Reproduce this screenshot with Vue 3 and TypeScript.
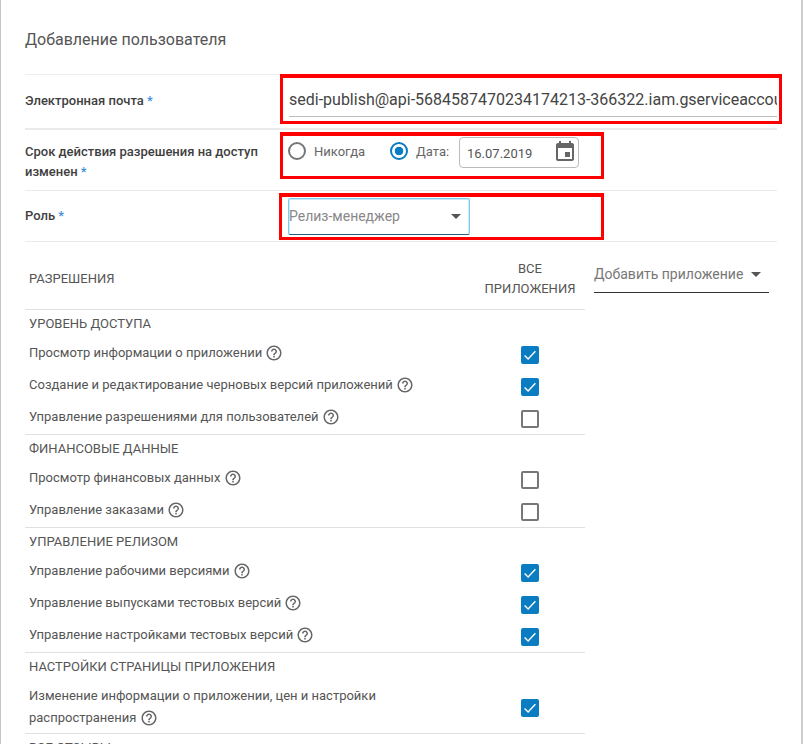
<script setup lang="ts">
interface Permission {
  label: string
  checked: boolean
  tall?: boolean
}

interface Section {
  title: string
  items: Permission[]
}

const email = 'sedi-publish@api-5684587470234174213-366322.iam.gserviceaccount.com'

const helpPath =
  'M11 18h2v-2h-2v2zm1-16C6.48 2 2 6.48 2 12s4.48 10 10 10 10-4.48 10-10S17.52 2 12 2zm0 18c-4.41 0-8-3.59-8-8s3.59-8 8-8 8 3.59 8 8-3.59 8-8 8zm0-14c-2.21 0-4 1.79-4 4h2c0-1.1.9-2 2-2s2 .9 2 2c0 2-3 1.75-3 5h2c0-2.25 3-2.5 3-5 0-2.21-1.79-4-4-4z'

const sections: Section[] = [
  {
    title: 'Уровень доступа',
    items: [
      { label: 'Просмотр информации о приложении', checked: true },
      { label: 'Создание и редактирование черновых версий приложений', checked: true },
      { label: 'Управление разрешениями для пользователей', checked: false },
    ],
  },
  {
    title: 'Финансовые данные',
    items: [
      { label: 'Просмотр финансовых данных', checked: false },
      { label: 'Управление заказами', checked: false },
    ],
  },
  {
    title: 'Управление релизом',
    items: [
      { label: 'Управление рабочими версиями', checked: true },
      { label: 'Управление выпусками тестовых версий', checked: true },
      { label: 'Управление настройками тестовых версий', checked: true },
    ],
  },
  {
    title: 'Настройки страницы приложения',
    items: [
      {
        label: 'Изменение информации о приложении, цен и настройки распространения',
        checked: true,
        tall: true,
      },
    ],
  },
  { title: 'Все отзывы', items: [] },
]
</script>

<template>
  <div class="page">
    <h1 class="title">Добавление пользователя</h1>

    <section class="form">
      <div class="form-row row-email">
        <div class="form-label">Электронная почта <span class="req">*</span></div>
        <div class="email-value">{{ email }}</div>
      </div>
      <div class="form-row row-expiry">
        <div class="form-label">Срок действия разрешения на доступ изменен <span class="req">*</span></div>
        <div class="expiry">
          <span class="radio"></span>
          <span class="radio-text never">Никогда</span>
          <span class="radio on"></span>
          <span class="radio-text date-label">Дата:</span>
          <div class="date-box">
            <span>16.07.2019</span>
            <svg class="calendar" viewBox="0 0 24 24" width="24" height="24">
              <path
                d="M17 12h-5v5h5v-5zM16 1v2H8V1H6v2H5c-1.11 0-1.99.9-1.99 2L3 19c0 1.1.89 2 2 2h14c1.1 0 2-.9 2-2V5c0-1.1-.9-2-2-2h-1V1h-2zm3 18H5V8h14v11z"
              />
            </svg>
          </div>
        </div>
      </div>
      <div class="form-row row-role">
        <div class="form-label">Роль <span class="req">*</span></div>
        <div class="role-select">
          <span>Релиз-менеджер</span>
          <span class="caret"></span>
        </div>
      </div>
    </section>

    <section class="perms">
      <div class="perms-table">
        <div class="perms-head">
          <span>Разрешения</span>
          <span class="all-apps">Все приложения</span>
        </div>
        <div v-for="section in sections" :key="section.title" class="group">
          <div class="group-title">{{ section.title }}</div>
          <div
            v-for="item in section.items"
            :key="item.label"
            class="perm-row"
            :class="{ tall: item.tall }"
          >
            <div class="perm-label">
              {{ item.label }}
              <svg class="help" viewBox="0 0 24 24" width="18" height="18">
                <path :d="helpPath" />
              </svg>
            </div>
            <span class="check-cell">
              <span class="checkbox" :class="{ checked: item.checked }">
                <svg v-if="item.checked" viewBox="0 0 18 18" width="18" height="18">
                  <path d="M3.6 9.6l3.5 3.3 7.3-7.6" fill="none" stroke="#fff" stroke-width="1.4" />
                </svg>
              </span>
            </span>
          </div>
        </div>
      </div>
      <div class="add-app">
        <span>Добавить приложение</span>
        <span class="caret"></span>
      </div>
    </section>

    <!-- red annotation frames drawn over the form -->
    <div class="mark mark-email"></div>
    <div class="mark mark-expiry"></div>
    <div class="mark mark-role"></div>
  </div>
</template>

<style scoped>
.page {
  position: relative;
  box-sizing: border-box;
  width: 803px;
  height: 744px;
  overflow: hidden;
  padding: 0 24px 0 24px;
  border-left: 1px solid #c4c4c4;
  border-right: 2px solid #cdcdcd;
  background: #fff;
  font-family: Roboto, 'Liberation Sans', sans-serif;
  color: #555;
}

.title {
  margin: 0;
  height: 74px;
  padding-top: 30px;
  box-sizing: border-box;
  font-size: 16px;
  font-weight: 400;
  line-height: 20px;
  color: #555;
}

/* Form rows */
.form {
  border-top: 1px solid #eee;
}

.form-row {
  display: flex;
  align-items: center;
  box-sizing: border-box;
  border-bottom: 1px solid #eaeaea;
}

.row-email {
  height: 55px;
  border-bottom-width: 2px;
}

.row-expiry {
  height: 61px;
}

.row-role {
  height: 51px;
}

.form-label {
  flex: none;
  width: 255px;
  font-size: 13px;
  font-weight: 500;
  line-height: 20px;
  color: #3f3f3f;
}

.row-email .form-label {
  margin-top: -2px;
}

.row-expiry .form-label {
  margin-top: 4px;
}

.req {
  color: #3f8fd8;
}

.email-value {
  box-sizing: border-box;
  width: 497px;
  height: 30px;
  margin-left: 9px;
  padding-top: 3px;
  overflow: hidden;
  white-space: nowrap;
  border-bottom: 1px solid #bdbdbd;
  font-size: 16px;
  line-height: 20px;
  color: #444;
}

.expiry {
  display: flex;
  align-items: center;
  margin-left: 8px;
  margin-top: -16px;
}

.radio {
  box-sizing: border-box;
  width: 18px;
  height: 18px;
  margin-bottom: 2px;
  border: 2px solid #777;
  border-radius: 50%;
}

.radio.on {
  border-color: #0a7cc2;
  background: radial-gradient(circle, #0a7cc2 0 4px, #fff 4.6px);
}

.radio-text {
  margin-bottom: 2px;
  font-size: 13px;
  color: #666;
}

.never {
  margin-left: 8px;
  width: 76px;
}

.date-label {
  margin-left: 8px;
  width: 43px;
}

.date-box {
  display: flex;
  align-items: center;
  justify-content: space-between;
  box-sizing: border-box;
  width: 120px;
  height: 31px;
  padding: 3px 1px 0 7px;
  border: 1px solid #bbb;
  border-radius: 4px;
  font-size: 13px;
  color: #555;
}

.calendar {
  margin-top: -3px;
  fill: #666;
}

.role-select {
  display: flex;
  align-items: center;
  justify-content: space-between;
  box-sizing: border-box;
  width: 182px;
  height: 37px;
  margin-left: 8px;
  padding-right: 8px;
  border: 1px solid #7fcbee;
  border-bottom-color: #2c5f7f;
  border-radius: 2px;
  box-shadow: inset 1px 1px 0 #c9eaf9, inset -1px 0 0 #c9eaf9;
  font-size: 14px;
  color: #888;
}

.caret {
  width: 0;
  height: 0;
  border-left: 5.5px solid transparent;
  border-right: 5.5px solid transparent;
  border-top: 5.5px solid #555;
}

/* Permissions table */
.perms {
  display: flex;
  align-items: flex-start;
}

.perms-table {
  flex: none;
  width: 560px;
}

.perms-head {
  display: flex;
  align-items: center;
  justify-content: space-between;
  height: 67px;
  padding: 7px 0 0 4px;
  box-sizing: border-box;
  font-size: 13px;
  line-height: 20px;
  text-transform: uppercase;
  color: #555;
}

.all-apps {
  width: 110px;
  text-align: center;
}

.group {
  border-top: 1px solid #e0e0e0;
}

.group-title {
  box-sizing: border-box;
  height: 29px;
  padding-left: 4px;
  font-size: 13px;
  line-height: 27px;
  text-transform: uppercase;
  color: #555;
}

.perm-row {
  display: flex;
  justify-content: space-between;
  box-sizing: border-box;
  height: 32px;
  padding-left: 4px;
}

.perm-row:last-child {
  height: 31px;
}

.perm-row.tall {
  height: 51px;
}

.perm-label {
  width: 400px;
  padding-top: 3px;
  font-size: 13px;
  line-height: 22px;
  color: #555;
}

.help {
  margin-left: 0;
  vertical-align: -5px;
  fill: #666;
}

.check-cell {
  width: 110px;
  display: flex;
  justify-content: center;
  padding-top: 7px;
}

.perm-row.tall .check-cell {
  padding-top: 17px;
}

.checkbox {
  box-sizing: border-box;
  display: block;
  width: 18px;
  height: 18px;
  border: 2px solid #777;
  border-radius: 2px;
}

.checkbox.checked {
  border: none;
  background: #0a7cc2;
}

.checkbox svg {
  display: block;
}

.add-app {
  flex: none;
  display: flex;
  align-items: center;
  justify-content: space-between;
  box-sizing: border-box;
  width: 175px;
  height: 31px;
  margin: 20px 0 0 9px;
  padding: 0 8px 6px 0;
  border-bottom: 1px solid #333;
  font-size: 14px;
  color: #777;
}

/* Red annotation frames */
.mark {
  position: absolute;
  box-sizing: border-box;
  border: 3px solid #f00;
  border-top-width: 4px;
  pointer-events: none;
}

.mark-email {
  left: 279px;
  top: 74px;
  width: 502px;
  height: 50px;
}

.mark-expiry {
  left: 279px;
  top: 132px;
  width: 324px;
  height: 47px;
}

.mark-role {
  left: 278px;
  top: 193px;
  width: 325px;
  height: 47px;
}
</style>
